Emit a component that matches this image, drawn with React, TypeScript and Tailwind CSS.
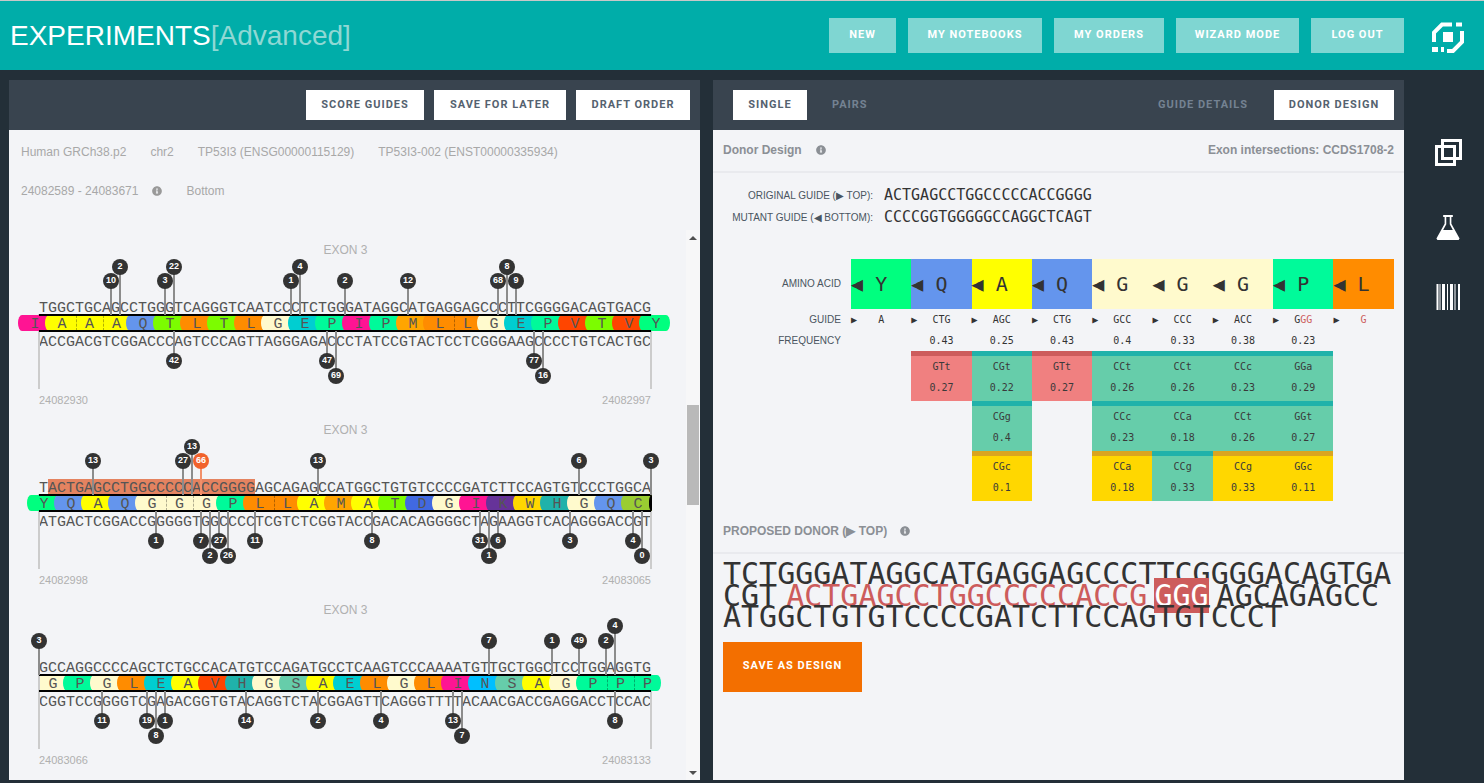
import React from "react";
import { FaInfoCircle } from "react-icons/fa";

const AA: Record<string, string> = {
  I: "bg-[#ff1493]", A: "bg-[#ffff00]", Q: "bg-[#6495ed]", T: "bg-[#7cfc00]", L: "bg-[#ff8c00]",
  G: "bg-[#fffacd]", E: "bg-[#00ced1]", P: "bg-[#00fa9a]", M: "bg-[#ffa500]", V: "bg-[#ff4500]",
  Y: "bg-[#00ff7f]", D: "bg-[#4169e1]", K: "bg-[#663399]", W: "bg-[#ffd700]", H: "bg-[#20b2aa]",
  C: "bg-[#9acd32]", S: "bg-[#66cdaa]", N: "bg-[#00bfff]", X: "bg-[#000000]",
};

type Pin = [number, string, number, boolean?];

type Exon = {
  top: string; bottom: string; aa: string; left: number; start: string; end: string;
  up: Pin[]; down: Pin[]; highlight?: boolean; lastCut?: boolean; flatStart?: boolean;
};

const exons: Exon[] = [
  {
    top: "TGGCTGCAGCCTGGGTCAGGGTCAATCCCTCTGGGATAGGCATGAGGAGCCCTTCGGGGACAGTGACG",
    bottom: "ACCGACGTCGGACCCAGTCCCAGTTAGGGAGACCCTATCCGTACTCCTCGGGAAGCCCCTGTCACTGC",
    aa: "IAAAQTLTLGEPIPMLLGEPVTVY", left: -17.5, start: "24082930", end: "24082997",
    up: [[111, "10", 281], [120, "2", 267], [165, "3", 281], [174, "22", 267], [291, "1", 281], [300, "4", 267], [345, "2", 281], [408, "12", 281], [498, "68", 281], [507, "8", 267], [516, "9", 281]],
    down: [[174, "42", 361], [327, "47", 361], [336, "69", 376], [534, "77", 361], [543, "16", 376]],
  },
  {
    top: "TACTGAGCCTGGCCCCCACCGGGGAGCAGAGCCATGGCTGTGTCCCCGATCTTCCAGTGTCCCTGGCA",
    bottom: "ATGACTCGGACCGGGGGTGGCCCCTCGTCTCGGTACCGACACAGGGGCTAGAAGGTCACAGGGACCGT",
    aa: "YQAQGGGPLLAMATDGIKWHGQCX", left: -8.5, start: "24082998", end: "24083065", highlight: true, lastCut: true,
    up: [[93, "13", 281], [183, "27", 281], [192, "13", 267], [201, "66", 281, true], [318, "13", 281], [579, "6", 281], [651, "3", 281]],
    down: [[156, "1", 361], [201, "7", 361], [210, "2", 376], [219, "27", 361], [228, "26", 376], [255, "11", 361], [372, "8", 361], [480, "31", 361], [489, "1", 376], [498, "6", 361], [570, "3", 361], [633, "4", 361], [642, "0", 376]],
  },
  {
    top: "GCCAGGCCCCAGCTCTGCCACATGTCCAGATGCCTCAAGTCCCAAAATGTTGCTGGCTCCTGGAGGTG",
    bottom: "CGGTCCGGGGTCGAGACGGTGTACAGGTCTACGGAGTTCAGGGTTTTACAACGACCGAGGACCTCCAC",
    aa: "GPGLEAVHGSAELGLINSAGPPP", left: 0.5, start: "24083066", end: "24083133", flatStart: true,
    up: [[39, "3", 281], [489, "7", 281], [552, "1", 281], [579, "49", 281], [606, "2", 281], [615, "4", 266]],
    down: [[102, "11", 361], [147, "19", 361], [156, "8", 376], [165, "1", 361], [246, "14", 361], [318, "2", 361], [381, "4", 361], [453, "13", 361], [462, "7", 376], [615, "8", 361]],
  },
];

function PinMark({ x, label, y, dir, orange }: { x: number; label: string; y: number; dir: "up" | "down"; orange?: boolean }) {
  const lineTop = dir === "up" ? y : 331;
  const lineH = dir === "up" ? 315 - y : y - 331;
  return (
    <>
      <div
        className={`absolute w-[2px] ${orange ? "bg-[#f2906a]" : "bg-[#8c8c8c]"}`}
        style={{ left: x - 10, top: lineTop - 230, height: lineH }}
      />
      <div
        className={`absolute flex h-[16px] w-[16px] items-center justify-center rounded-full text-[9px] font-bold text-white ${orange ? "bg-[#f1622c]" : "bg-[#333333]"}`}
        style={{ left: x - 17, top: y - 8 - 230 }}
      >
        {label}
      </div>
    </>
  );
}

function AminoStrip({ e }: { e: Exon }) {
  const letters = e.aa.split("");
  return (
    <div className="absolute top-[1px] flex h-[16px]" style={{ left: e.left }}>
      {letters.map((c, i) => {
        const same = i > 0 && letters[i - 1] === c;
        const first = i === 0;
        const last = i === letters.length - 1;
        const flat = first && e.flatStart;
        return (
          <div
            key={i}
            className={`relative flex h-[16px] shrink-0 items-center justify-center pt-[2px] font-['Liberation_Mono',monospace] text-[15px] leading-none text-[#555555] ${AA[c]} ${
              same || flat
                ? "w-[27px]"
                : "-ml-[4px] w-[31px] rounded-l-[4px_8px] pl-[4px]"
            } ${same ? "border-l border-dashed border-black/30" : ""} ${last && !e.lastCut ? "rounded-r-[4px_8px]" : ""}`}
            style={last && e.lastCut ? { width: 3, marginLeft: -3, paddingLeft: 0 } : undefined}
          >
            {c === "X" ? "" : c}
          </div>
        );
      })}
    </div>
  );
}

function ExonBlock({ e }: { e: Exon }) {
  return (
    <div className="relative h-[180px] w-[672px] shrink-0">
      <div className="absolute w-[2px] bg-[#cccccc]" style={{ left: 29, top: 84, height: 75 }} />
      <div className="absolute w-[2px] bg-[#cccccc]" style={{ left: 641, top: 84, height: 75 }} />
      <div className="pl-[1px] pt-[13px] text-center text-[12px] leading-[14px] text-[#b0b0b0]">EXON 3</div>
      <div className="relative ml-[30px] mt-[43px] h-[18px] w-[640px] font-['Liberation_Mono',monospace] text-[15px] leading-[18px] text-[#555555]">
        {e.highlight && <div className="absolute left-[9px] top-[-1px] h-[15px] w-[207px] bg-[#e0663a]/80" />}
        <span className="relative whitespace-pre">{e.top}</span>
      </div>
      <div className="relative ml-[30px] -mt-[4px] h-[18px] w-[612px]">
        <AminoStrip e={e} />
        <div className="absolute left-0 top-0 h-[2px] w-[612px] bg-black" />
        <div className="absolute left-0 top-[16px] h-[2px] w-[612px] bg-black" />
      </div>
      <div className="ml-[30px] mt-[2px] h-[18px] font-['Liberation_Mono',monospace] text-[15px] leading-[18px] text-[#555555]">
        <span className="whitespace-pre">{e.bottom}</span>
      </div>
      <div className="ml-[30px] mt-[41px] flex w-[612px] justify-between text-[11px] leading-[14px] text-[#b0b0b0]">
        <span>{e.start}</span>
        <span>{e.end}</span>
      </div>
      {e.up.map((p, i) => (
        <PinMark key={`u${i}`} x={p[0]} label={p[1]} y={p[2]} dir="up" orange={p[3]} />
      ))}
      {e.down.map((p, i) => (
        <PinMark key={`d${i}`} x={p[0]} label={p[1]} y={p[2]} dir="down" />
      ))}
    </div>
  );
}

function TopBtn({ children, w }: { children: React.ReactNode; w: string }) {
  return (
    <div className={`flex h-[35px] items-center justify-center bg-[#7fd6d2] font-['Roboto',sans-serif] text-[11px] font-bold tracking-[1px] text-white ${w}`}>
      {children}
    </div>
  );
}

function PanelBtn({ children, w }: { children: React.ReactNode; w: string }) {
  return (
    <div className={`flex h-[30px] items-center justify-center bg-white font-['Roboto',sans-serif] text-[11px] font-bold tracking-[1px] text-[#55626f] ${w}`}>
      {children}
    </div>
  );
}

function Logo() {
  return (
    <svg width="32" height="32" viewBox="0 0 32 32" fill="none">
      <path d="M2 21V11.5L10 3.5H20" stroke="#fff" strokeWidth="4" />
      <rect x="24" y="1.5" width="6" height="4" fill="#fff" />
      <path d="M30 10V21L21 30H15" stroke="#fff" strokeWidth="4" />
      <rect x="11" y="11" width="10" height="10" fill="#fff" />
      <rect x="0" y="26" width="6" height="5" fill="#fff" />
      <rect x="9" y="26" width="3" height="5" fill="#fff" />
    </svg>
  );
}

const cols = ["Y", "Q", "A", "Q", "G", "G", "G", "P", "L"];
const guide = ["A", "CTG", "AGC", "CTG", "GCC", "CCC", "ACC", "GGG", "G"];
const freq = ["", "0.43", "0.25", "0.43", "0.4", "0.33", "0.38", "0.23", ""];

type Card = [string, string, "r" | "t" | "y"] | null;
const cards: Card[][] = [
  [["GTt", "0.27", "r"], ["CGt", "0.22", "t"], ["GTt", "0.27", "r"], ["CCt", "0.26", "t"], ["CCt", "0.26", "t"], ["CCc", "0.23", "t"], ["GGa", "0.29", "t"]],
  [null, ["CGg", "0.4", "t"], null, ["CCc", "0.23", "t"], ["CCa", "0.18", "t"], ["CCt", "0.26", "t"], ["GGt", "0.27", "t"]],
  [null, ["CGc", "0.1", "y"], null, ["CCa", "0.18", "y"], ["CCg", "0.33", "t"], ["CCg", "0.33", "y"], ["GGc", "0.11", "y"]],
];
const cardStyle = {
  r: "bg-[#f08080] border-[#cd5c5c]",
  t: "bg-[#66cdaa] border-[#20b2aa]",
  y: "bg-[#ffd700] border-[#daa520]",
};

const mono = "font-['DejaVu_Sans_Mono',monospace]";

export default function App() {
  return (
    <div className="flex h-[783px] w-[1484px] flex-col overflow-hidden bg-[#232f38] font-['Liberation_Sans',sans-serif]">
      <header className="flex h-[70px] shrink-0 items-center border-t border-[#c8c8c8] bg-[#00ada9] pl-[10px]">
        <div className="text-[28px] leading-none text-white">
          EXPERIMENTS<span className="text-[#8fd8d4]">[Advanced]</span>
        </div>
        <div className="ml-auto flex gap-[12px] pb-[1px]">
          <TopBtn w="w-[67px]">NEW</TopBtn>
          <TopBtn w="w-[134px]">MY NOTEBOOKS</TopBtn>
          <TopBtn w="w-[110px]">MY ORDERS</TopBtn>
          <TopBtn w="w-[123px]">WIZARD MODE</TopBtn>
          <TopBtn w="w-[93px]">LOG OUT</TopBtn>
        </div>
        <div className="flex w-[80px] items-center justify-center pl-[8px] pt-[3px]">
          <Logo />
        </div>
      </header>

      <main className="flex min-h-0 flex-1 pb-[3px] pl-[9px] pt-[10px]">
        {/* left */}
        <section className="flex h-[700px] w-[691px] shrink-0 flex-col bg-[#f3f4f7]">
          <div className="flex h-[50px] shrink-0 items-center justify-end gap-[10px] bg-[#39444f] pr-[10px]">
            <PanelBtn w="w-[118px]">SCORE GUIDES</PanelBtn>
            <PanelBtn w="w-[132px]">SAVE FOR LATER</PanelBtn>
            <PanelBtn w="w-[114px]">DRAFT ORDER</PanelBtn>
          </div>
          <div className="h-[100px] shrink-0 pl-[12px] text-[12px] text-[#a8a8a8]">
            <div className="flex h-[43px] items-center gap-[24px] pt-[1px]">
              <span>Human GRCh38.p2</span>
              <span>chr2</span>
              <span>TP53I3 (ENSG00000115129)</span>
              <span>TP53I3-002 (ENST00000335934)</span>
            </div>
            <div className="flex h-[35px] items-center">
              <span>24082589 - 24083671</span>
              <FaInfoCircle className="ml-[14px] h-[10px] w-[10px] text-[#999999]" />
              <span className="ml-[24px]">Bottom</span>
            </div>
          </div>
          <div className="flex min-h-0 flex-1">
            <div className="min-w-0 flex-1 overflow-hidden">
              <div className="flex flex-col">
                {exons.map((e) => (
                  <ExonBlock key={e.start} e={e} />
                ))}
              </div>
            </div>
            <div className="flex w-[14px] shrink-0 flex-col items-center bg-[#f7f7f8] pt-[6px]">
              <div className="h-0 w-0 border-x-[4px] border-b-[4px] border-x-transparent border-b-[#505050]" />
              <div className="mt-[165px] h-[100px] w-[12px] shrink-0 bg-[#b9b9b9]" />
              <div className="mt-[266px] h-0 w-0 border-x-[4px] border-t-[4px] border-x-transparent border-t-[#505050]" />
            </div>
          </div>
        </section>

        {/* right */}
        <section className="ml-[13px] flex h-[700px] w-[691px] shrink-0 flex-col bg-[#f3f4f7]">
          <div className="flex h-[50px] shrink-0 items-center bg-[#39444f] pl-[20px] pr-[10px]">
            <PanelBtn w="w-[74px]">SINGLE</PanelBtn>
            <span className="ml-[25px] font-['Roboto',sans-serif] text-[11px] font-bold tracking-[1px] text-[#748292]">PAIRS</span>
            <span className="ml-auto font-['Roboto',sans-serif] text-[11px] font-bold tracking-[1px] text-[#748292]">GUIDE DETAILS</span>
            <div className="ml-[26px]">
              <PanelBtn w="w-[120px]">DONOR DESIGN</PanelBtn>
            </div>
          </div>
          <div className="flex h-[43px] shrink-0 items-center border-b-2 border-[#e9eaee] px-[10px] pb-[1px] text-[12px] font-bold text-[#8b8f95]">
            <span>Donor Design</span>
            <FaInfoCircle className="ml-[14px] h-[10px] w-[10px] text-[#8b8f95]" />
            <span className="ml-auto">Exon intersections: CCDS1708-2</span>
          </div>

          <div className="mt-[11px] flex h-[22px] items-center">
            <div className="w-[160px] text-right text-[10px] text-[#4a5560]">ORIGINAL GUIDE (▶ TOP):</div>
            <div className={`ml-[11px] text-[15px] text-[#333333] ${mono}`}>ACTGAGCCTGGCCCCCACCGGGG</div>
          </div>
          <div className="flex h-[22px] items-center">
            <div className="w-[160px] text-right text-[10px] text-[#4a5560]">MUTANT GUIDE (◀ BOTTOM):</div>
            <div className={`ml-[11px] text-[15px] text-[#333333] ${mono}`}>CCCCGGTGGGGGCCAGGCTCAGT</div>
          </div>

          <div className="mt-[31px] grid grid-cols-[138px_repeat(9,60.3px)] text-[#333333]">
            <div className="flex h-[50px] items-center justify-end pb-[2px] pr-[10px] text-[10px] text-[#4a5560]">AMINO ACID</div>
            {cols.map((c, i) => (
              <div key={i} className={`grid h-[50px] grid-cols-[1fr_auto_1fr] items-center text-[20px] ${AA[c]} ${mono}`}>
                <span className="leading-none">◀</span>
                <span className="leading-none">{c}</span>
                <span />
              </div>
            ))}
            <div className="flex h-[21px] items-center justify-end pr-[10px] text-[10px] text-[#4a5560]">GUIDE</div>
            {guide.map((g, i) => (
              <div key={i} className={`grid h-[21px] grid-cols-[1fr_auto_1fr] items-center text-[10px] ${mono}`}>
                <span>▶</span>
                <span>
                  {i === 7 ? (
                    <>
                      G<span className="text-[#cd5c5c]">GG</span>
                    </>
                  ) : i === 8 ? (
                    <span className="text-[#cd5c5c]">G</span>
                  ) : (
                    g
                  )}
                </span>
                <span />
              </div>
            ))}
            <div className="flex h-[21px] items-center justify-end pr-[10px] text-[10px] text-[#4a5560]">FREQUENCY</div>
            {freq.map((f, i) => (
              <div key={i} className={`flex h-[21px] items-center justify-center text-[10px] ${mono}`}>
                {f}
              </div>
            ))}
          </div>

          <div className="ml-[198.3px] grid w-[422.1px] grid-cols-7">
            {cards.flat().map((c, i) =>
              c ? (
                <div key={i} className={`h-[50px] border-t-[5px] text-center text-[10px] leading-[21px] text-[#3a3a3a] ${cardStyle[c[2]]} ${mono}`}>
                  <div>{c[0]}</div>
                  <div>{c[1]}</div>
                </div>
              ) : (
                <div key={i} className="h-[50px]" />
              ),
            )}
          </div>

          <div className="mt-[15px] flex h-[38px] items-center border-b-2 border-[#e9eaee] px-[10px] pb-[6px] text-[12px] font-bold text-[#8b8f95]">
            <span>PROPOSED DONOR (▶ TOP)</span>
            <FaInfoCircle className="ml-[13px] h-[10px] w-[10px]" />
          </div>

          <div className={`mt-[9px] whitespace-nowrap pl-[10px] text-[30px] leading-[21.5px] text-[#333333] ${mono}`}>
            <div>TCTGGGATAGGCATGAGGAGCCCTTCGGGGACAGTGA</div>
            <div>
              CGT
              <span className="ml-[9px] text-[#cd5c5c]">ACTGAGCCTGGCCCCCACCG</span>
              <span className="ml-[7px] bg-[#cd5c5c] text-white">GGG</span>
              <span className="ml-[8px]">AGCAGAGCC</span>
            </div>
            <div>ATGGCTGTGTCCCCGATCTTCCAGTGTCCCT</div>
          </div>

          <div className="ml-[10px] mt-[14px] flex h-[50px] w-[139px] items-center justify-center bg-[#f36f00] font-['Roboto',sans-serif] text-[11px] font-bold tracking-[1px] text-white">
            SAVE AS DESIGN
          </div>
        </section>

        {/* sidebar */}
        <aside className="flex w-[80px] shrink-0 flex-col items-center pl-[8px] pt-[59px]">
          <svg width="27" height="27" viewBox="0 0 27 27" fill="none" stroke="#fff" strokeWidth="3">
            <rect x="7.5" y="1.5" width="18" height="18" />
            <rect x="1.5" y="7.5" width="18" height="18" />
          </svg>
          <svg className="mt-[48px]" width="26" height="27" viewBox="0 0 26 28">
            <path d="M8 1h10v2h-1.5v7L25 25.5 24 27H2l-1-1.5L9.5 10V3H8z" fill="#fff" />
            <path d="M11.2 3h3.6v7.6L18 16.5H8l3.2-5.9z" fill="#232f38" />
          </svg>
          <svg className="mt-[43px]" width="25" height="26" viewBox="0 0 25 26" fill="#fff">
            <rect x="0.5" y="0" width="2" height="26" />
            <rect x="3.5" y="0" width="1" height="26" />
            <rect x="6" y="0" width="3" height="26" />
            <rect x="11" y="0" width="1" height="26" />
            <rect x="14" y="0" width="3" height="26" />
            <rect x="18.5" y="0" width="1" height="26" />
            <rect x="22" y="0" width="2" height="26" />
          </svg>
        </aside>
      </main>
    </div>
  );
}
